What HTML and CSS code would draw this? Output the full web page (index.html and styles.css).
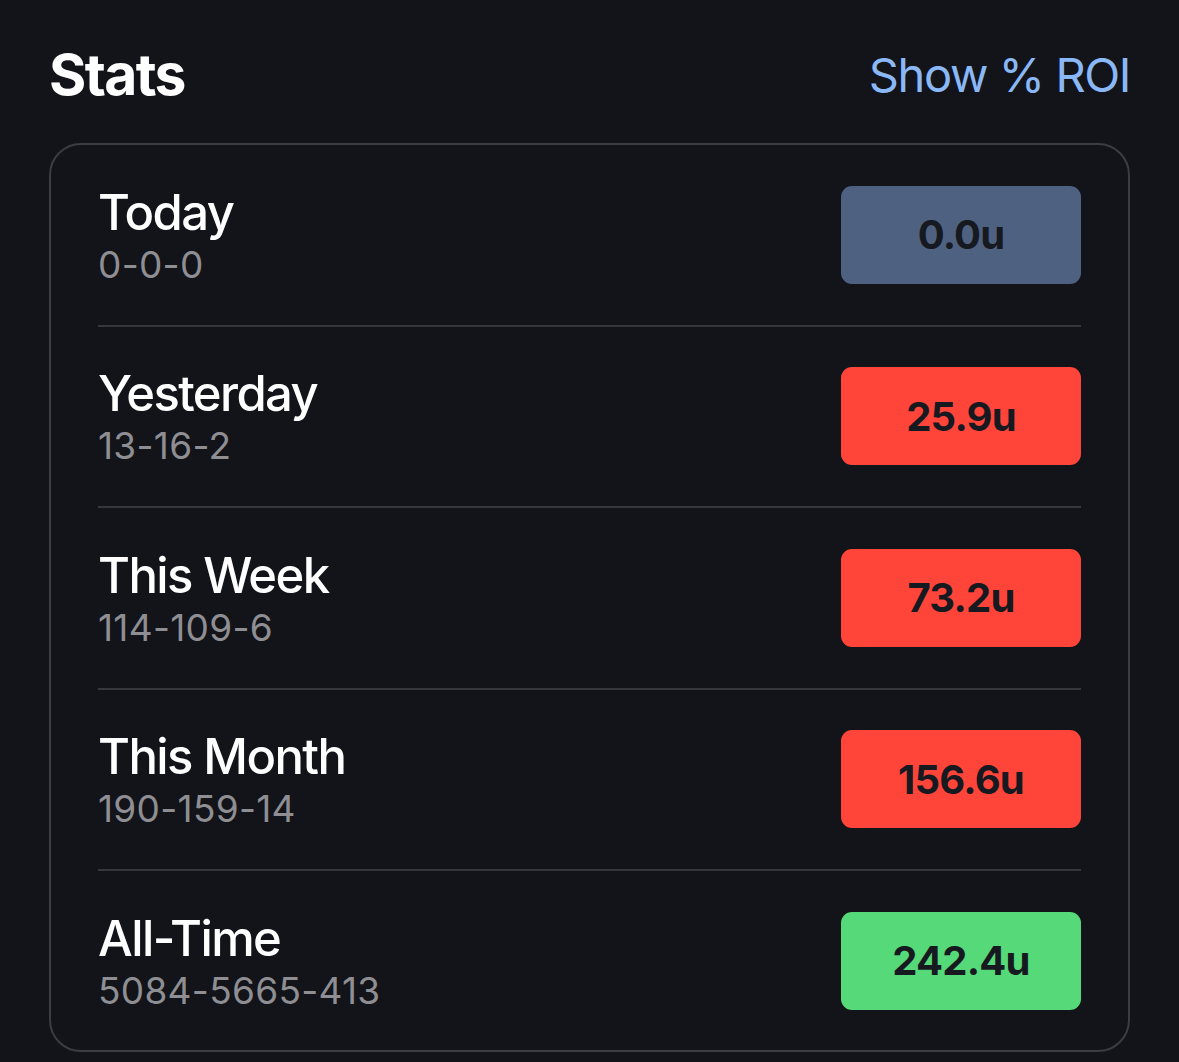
FILE: index.html
```html
<!DOCTYPE html>
<html>
<head>
<meta charset="utf-8">
<link rel="stylesheet" href="styles.css">
</head>
<body>
<div class="page">
  <div class="header">
    <h1 class="title">Stats</h1>
    <a class="roi">Show % ROI</a>
  </div>
  <div class="card">
    <div class="row">
      <div class="info"><div class="label">Today</div><div class="record">0-0-0</div></div>
      <div class="badge neutral">0.0u</div>
    </div>
    <div class="row">
      <div class="info"><div class="label">Yesterday</div><div class="record">13-16-2</div></div>
      <div class="badge loss">25.9u</div>
    </div>
    <div class="row">
      <div class="info"><div class="label">This Week</div><div class="record">114-109-6</div></div>
      <div class="badge loss">73.2u</div>
    </div>
    <div class="row">
      <div class="info"><div class="label">This Month</div><div class="record">190-159-14</div></div>
      <div class="badge loss">156.6u</div>
    </div>
    <div class="row">
      <div class="info"><div class="label">All-Time</div><div class="record">5084-5665-413</div></div>
      <div class="badge win">242.4u</div>
    </div>
  </div>
</div>
</body>
</html>
```
FILE: styles.css
```css
html, body {
  margin: 0;
  padding: 0;
  background: #121419;
}
body {
  font-family: Inter, "Noto Sans", sans-serif;
  color: #ffffff;
}
.page {
  padding: 36px 49px 0 49px;
}
.header {
  display: flex;
  justify-content: space-between;
  align-items: center;
  height: 76px;
  margin-bottom: 31px;
}
.title {
  margin: 0;
  font-size: 57px;
  font-weight: 700;
  letter-spacing: -1.6px;
  line-height: 1;
}
.roi {
  font-size: 47px;
  color: #8ab8f7;
  letter-spacing: -1.4px;
  line-height: 1;
}
.card {
  border: 2px solid #3a3d43;
  border-radius: 32px;
  padding: 0 47px;
}
.row {
  display: flex;
  justify-content: space-between;
  align-items: center;
  height: 179.5px;
  border-bottom: 2px solid #34373d;
}
.row:last-child {
  border-bottom: none;
  height: 179px;
}
.info {
  display: flex;
  flex-direction: column;
}
.label {
  font-size: 49px;
  font-weight: 500;
  letter-spacing: -1.6px;
  line-height: 60px;
}
.record {
  font-size: 37px;
  color: #8e8e93;
  line-height: 44px;
  letter-spacing: 0.3px;
}
.badge {
  width: 240px;
  height: 98px;
  border-radius: 11px;
  display: flex;
  align-items: center;
  justify-content: center;
  font-size: 40px;
  font-weight: 700;
  color: #161a20;
  letter-spacing: -0.8px;
}
.neutral { background: #4f6180; }
.loss { background: #ff443a; }
.win { background: #56d978; }
```
